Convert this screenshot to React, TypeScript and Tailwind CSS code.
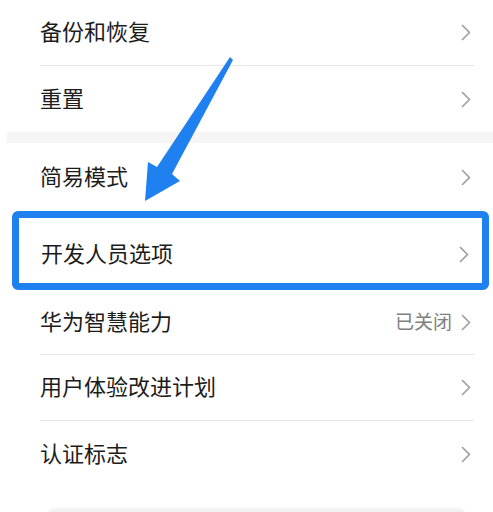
import React from 'react';

const font = { fontFamily: '"Noto Sans CJK SC", "Noto Sans", sans-serif' };

function Chevron() {
  return (
    <svg width="10" height="17" viewBox="0 0 10 17" className="shrink-0">
      <path d="M1.5 1.5 L8.5 8.5 L1.5 15.5" fill="none" stroke="#a0a0a0" strokeWidth="1.7" strokeLinecap="round" strokeLinejoin="round" />
    </svg>
  );
}

function Row({ label, value, height, divider }: { label: string; value?: string; height: string; divider?: boolean }) {
  return (
    <div className={`flex items-center justify-between ml-[40px] mr-[19px] ${height} ${divider ? 'border-b border-[#e6e6e6]' : ''}`}>
      <span className="text-[22px] text-[#1c1c1c] leading-none mb-[5px]">{label}</span>
      <div className="flex items-center gap-[9px] pr-[3px]">
        {value && <span className="text-[19px] text-[#808080] leading-none mb-[4px]">{value}</span>}
        <Chevron />
      </div>
    </div>
  );
}

export default function App() {
  return (
    <div className="relative w-[493px] h-[512px] bg-white overflow-hidden" style={font}>
      {/* first card */}
      <Row label="备份和恢复" height="h-[66px]" divider />
      <Row label="重置" height="h-[66px]" />

      <div className="ml-[7px] h-[11px] bg-[#f5f5f5]" />

      {/* second card */}
      <Row label="简易模式" height="h-[68px]" />

      <div className="ml-[12px] mr-[4px] h-[79px] border-[7px] border-[#1f80f0] rounded-[6px] flex items-center justify-between pl-[22px] pr-[13px] pt-2">
        <span className="text-[22px] text-[#1c1c1c] leading-none mb-[5px]">开发人员选项</span>
        <Chevron />
      </div>

      <Row label="华为智慧能力" value="已关闭" height="h-[65px]" divider />
      <Row label="用户体验改进计划" height="h-[66px]" divider />
      <Row label="认证标志" height="h-[67px]" />

      <div className="mt-[21px] ml-[48px] mr-[28px] h-[6px] rounded-t-full bg-[#f2f2f2] shadow-[0_-1px_3px_rgba(0,0,0,0.05)]" />

      {/* annotation arrow */}
      <svg className="absolute inset-0 pointer-events-none" width="493" height="512" viewBox="0 0 493 512">
        <path d="M230 57 L233 60 L172 174 L180 181 L145 201 L148 162 L157 167 Z" fill="#1f80f0" />
      </svg>
    </div>
  );
}
